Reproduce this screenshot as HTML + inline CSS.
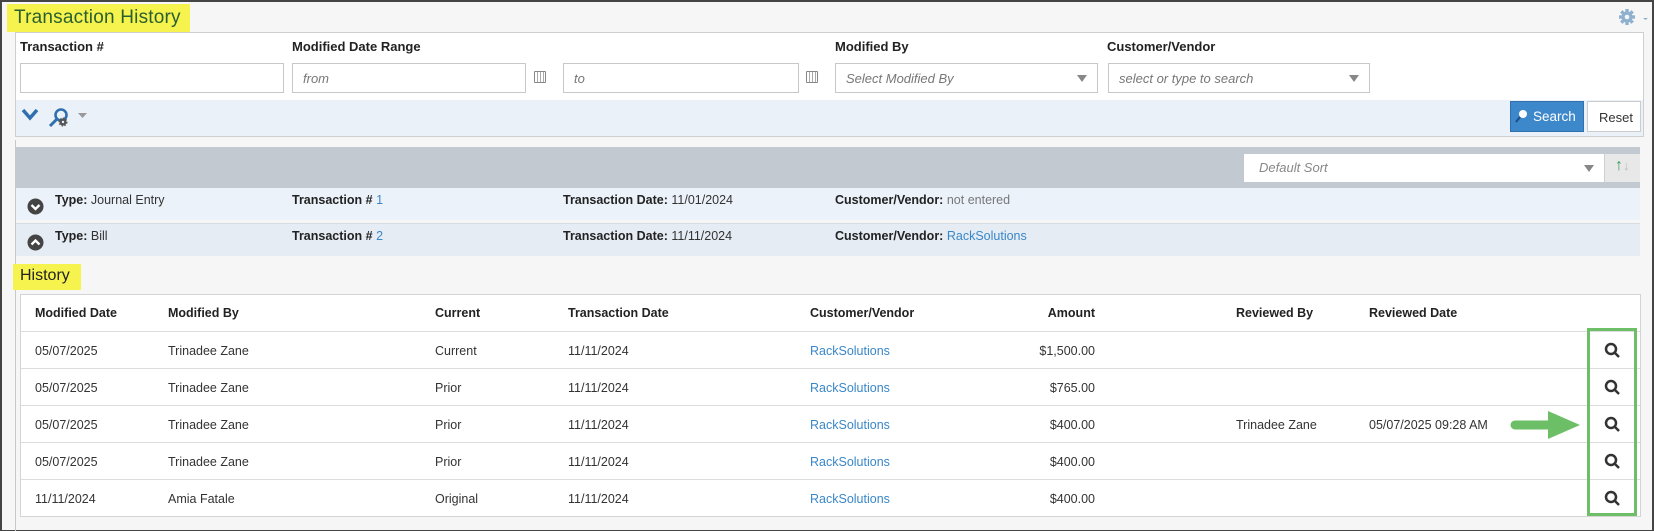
<!DOCTYPE html>
<html><head><meta charset="utf-8"><style>
*{box-sizing:border-box;margin:0;padding:0}
body{width:1654px;height:531px;overflow:hidden;background:#f6f6f6;font-family:"Liberation Sans",Arial,sans-serif;font-size:12.5px;color:#333;position:relative}
.a{position:absolute;white-space:nowrap}
.b{font-weight:bold;color:#222}
.in{position:absolute;background:#fff;border:1px solid #c8c8c8;height:30px;top:63px;font-style:italic;color:#777;font-size:13px;padding:7px 0 0 10px}
.dd{position:absolute;right:10px;top:11px;width:0;height:0;border-left:5px solid transparent;border-right:5px solid transparent;border-top:7px solid #888}
.cal{position:absolute;top:71px;width:12px;height:12px;border:1px solid #888;border-radius:1px;background:repeating-linear-gradient(90deg,#fff 0 2px,#aaa 2px 3px)}
.lnk{color:#3a87c8}
.row{position:absolute;left:21px;width:1619px;height:37px;border-top:1px solid #dcdcdc}
.row span{position:absolute;top:12px;white-space:nowrap}
</style></head><body>
<div class="a" style="left:0;top:0;width:1654px;height:531px;border:2px solid #444;border-bottom-width:1px"></div>
<div class="a" style="left:7px;top:4px;width:183px;height:28px;background:#f6f34e"></div>
<div class="a" style="left:14px;top:7px;font-size:19px;color:#2a5f2f;letter-spacing:0.2px">Transaction History</div>
<svg class="a" style="left:1618px;top:9px" width="32" height="18" viewBox="0 0 32 18"><g fill="#8fb0cf"><circle cx="9" cy="8" r="5.5"/><g stroke="#8fb0cf" stroke-width="3.4"><line x1="9" y1="0" x2="9" y2="16"/><line x1="1" y1="8" x2="17" y2="8"/><line x1="3.3" y1="2.3" x2="14.7" y2="13.7"/><line x1="3.3" y1="13.7" x2="14.7" y2="2.3"/></g></g><circle cx="9" cy="8" r="2.3" fill="#f6f6f6"/><path d="M25 9h5l-2.5 2z" fill="#8fb0cf"/></svg>

<div class="a" style="left:15px;top:32px;width:1629px;height:105px;background:#fff;border:1px solid #cfcfcf"></div>
<div class="a" style="left:16px;top:100px;width:1627px;height:36px;background:#eaf1f9"></div>
<div class="a b" style="left:20px;top:39px;font-size:13px">Transaction #</div>
<div class="a b" style="left:292px;top:39px;font-size:13px">Modified Date Range</div>
<div class="a b" style="left:835px;top:39px;font-size:13px">Modified By</div>
<div class="a b" style="left:1107px;top:39px;font-size:13px">Customer/Vendor</div>
<div class="in" style="left:20px;width:264px"></div>
<div class="in" style="left:292px;width:234px">from</div>
<div class="cal" style="left:534px"></div>
<div class="in" style="left:563px;width:236px">to</div>
<div class="cal" style="left:806px"></div>
<div class="in" style="left:835px;width:263px">Select Modified By<div class="dd"></div></div>
<div class="in" style="left:1108px;width:262px">select or type to search<div class="dd"></div></div>
<svg class="a" style="left:21px;top:107px" width="70" height="22" viewBox="0 0 70 22"><path d="M2 3l7 8 7-8" fill="none" stroke="#2f6fb0" stroke-width="3.5"/><circle cx="40" cy="8" r="5.5" fill="none" stroke="#2f6fb0" stroke-width="2.6"/><line x1="36" y1="12" x2="29" y2="19" stroke="#2f6fb0" stroke-width="3"/><circle cx="42" cy="15" r="3.5" fill="#555" stroke="#555" stroke-width="2" stroke-dasharray="1.5 1.2"/><circle cx="42" cy="15" r="1.2" fill="#eaf1f9"/><path d="M57 6h9l-4.5 5z" fill="#999"/></svg>
<div class="a" style="left:1510px;top:101px;width:74px;height:31px;background:#3d88cb;border:1px solid #2f70ad;color:#fff;font-size:13.5px;padding:7px 0 0 22px">Search</div>
<svg class="a" style="left:1514px;top:108px" width="14" height="16"><circle cx="9" cy="6" r="4" fill="#fff"/><line x1="6" y1="9" x2="2" y2="14" stroke="#1d4f86" stroke-width="2"/></svg>
<div class="a" style="left:1587px;top:101px;width:54px;height:31px;background:#fff;border:1px solid #ccc;font-size:13px;padding:8px 0 0 11px">Reset</div>

<div class="a" style="left:15px;top:140px;width:1px;height:391px;background:#c8c8c8"></div>
<div class="a" style="left:16px;top:147px;width:1624px;height:41px;background:#c3c9d1"></div>
<div class="a" style="left:1244px;top:154px;width:360px;height:28px;background:#fff;font-style:italic;color:#888;font-size:13px;padding:6px 0 0 15px">Default Sort<div class="dd" style="top:11px"></div></div>
<div class="a" style="left:1604px;top:154px;width:36px;height:28px;background:#e8e8e8;border-left:1px solid #d0d0d0;font-size:16px;padding:3px 0 0 10px"><span style="color:#3a9a5a;font-weight:bold">↑</span><span style="color:#bbb;font-size:13px">↓</span></div>
<div class="a" style="left:16px;top:188px;width:1624px;height:32px;background:#ebf2fa"></div>
<div class="a" style="left:16px;top:223px;width:1624px;height:33px;background:#e5ecf4;border-top:1px solid #d8dde3"></div>
<svg class="a" style="left:27px;top:198px" width="17" height="17"><circle cx="8.5" cy="8.5" r="8" fill="#444"/><path d="M4.5 7l4 4 4-4" fill="none" stroke="#fff" stroke-width="2.3"/></svg>
<svg class="a" style="left:27px;top:234px" width="17" height="17"><circle cx="8.5" cy="8.5" r="8" fill="#444"/><path d="M4.5 10.5l4-4 4 4" fill="none" stroke="#fff" stroke-width="2.3"/></svg>
<div class="a" style="left:55px;top:193px"><b class="b">Type:</b> Journal Entry</div>
<div class="a" style="left:292px;top:193px"><b class="b">Transaction #</b> <span class="lnk">1</span></div>
<div class="a" style="left:563px;top:193px"><b class="b">Transaction Date:</b> 11/01/2024</div>
<div class="a" style="left:835px;top:193px"><b class="b">Customer/Vendor:</b> <span style="color:#777">not entered</span></div>
<div class="a" style="left:55px;top:229px"><b class="b">Type:</b> Bill</div>
<div class="a" style="left:292px;top:229px"><b class="b">Transaction #</b> <span class="lnk">2</span></div>
<div class="a" style="left:563px;top:229px"><b class="b">Transaction Date:</b> 11/11/2024</div>
<div class="a" style="left:835px;top:229px"><b class="b">Customer/Vendor:</b> <span class="lnk">RackSolutions</span></div>

<div class="a" style="left:13px;top:264px;width:68px;height:26px;background:#f6f34e"></div>
<div class="a" style="left:20px;top:267px;font-size:16px;color:#222">History</div>

<div class="a" style="left:20px;top:294px;width:1621px;height:223px;background:#fff;border:1px solid #d4d4d4"></div>
<div class="row" style="top:294px;border-top:none"><span class="b" style="left:14px">Modified Date</span><span class="b" style="left:147px">Modified By</span><span class="b" style="left:414px">Current</span><span class="b" style="left:547px">Transaction Date</span><span class="b" style="left:789px">Customer/Vendor</span><span class="b" style="right:545px">Amount</span><span class="b" style="left:1215px">Reviewed By</span><span class="b" style="left:1348px">Reviewed Date</span></div>
<div class="row" style="top:331px"><span style="left:14px">05/07/2025</span><span style="left:147px">Trinadee Zane</span><span style="left:414px">Current</span><span style="left:547px">11/11/2024</span><span class="lnk" style="left:789px">RackSolutions</span><span style="right:545px">$1,500.00</span></div>
<div class="row" style="top:368px"><span style="left:14px">05/07/2025</span><span style="left:147px">Trinadee Zane</span><span style="left:414px">Prior</span><span style="left:547px">11/11/2024</span><span class="lnk" style="left:789px">RackSolutions</span><span style="right:545px">$765.00</span></div>
<div class="row" style="top:405px"><span style="left:14px">05/07/2025</span><span style="left:147px">Trinadee Zane</span><span style="left:414px">Prior</span><span style="left:547px">11/11/2024</span><span class="lnk" style="left:789px">RackSolutions</span><span style="right:545px">$400.00</span><span style="left:1215px">Trinadee Zane</span><span style="left:1348px">05/07/2025 09:28 AM</span></div>
<div class="row" style="top:442px"><span style="left:14px">05/07/2025</span><span style="left:147px">Trinadee Zane</span><span style="left:414px">Prior</span><span style="left:547px">11/11/2024</span><span class="lnk" style="left:789px">RackSolutions</span><span style="right:545px">$400.00</span></div>
<div class="row" style="top:479px"><span style="left:14px">11/11/2024</span><span style="left:147px">Amia Fatale</span><span style="left:414px">Original</span><span style="left:547px">11/11/2024</span><span class="lnk" style="left:789px">RackSolutions</span><span style="right:545px">$400.00</span></div>
<svg class="a" style="left:1604px;top:342px" width="17" height="170" viewBox="0 0 17 170"><g fill="none" stroke="#333" stroke-width="2.5"><g id="m"><circle cx="7" cy="7" r="5"/><line x1="10.5" y1="10.5" x2="15" y2="15"/></g><use href="#m" y="37"/><use href="#m" y="74"/><use href="#m" y="111"/><use href="#m" y="148"/></g></svg>
<div class="a" style="left:1587px;top:328px;width:50px;height:188px;border:3px solid #6cbf66"></div>
<svg class="a" style="left:1510px;top:409px" width="72" height="32"><line x1="5" y1="16" x2="42" y2="16" stroke="#6cbf66" stroke-width="9" stroke-linecap="round"/><path d="M38 2L70 16 38 30z" fill="#6cbf66"/></svg>
</body></html>
